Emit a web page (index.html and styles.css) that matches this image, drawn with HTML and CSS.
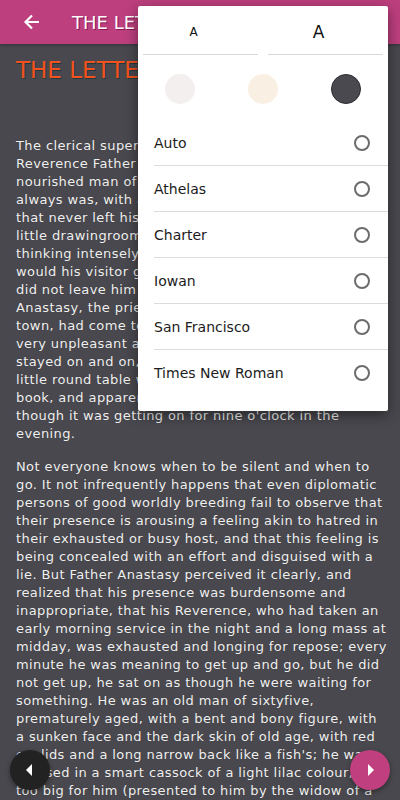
FILE: index.html
```html
<!DOCTYPE html>
<html>
<head>
    <link rel="stylesheet" href="styles.css">
</head>
<body>

<header class="topbar">
    <a href="#back" class="back-btn">
        <svg width="18" height="18" viewBox="0 0 18 18"><path d="M16 9H3M9 2.5L2.5 9 9 15.5" fill="none" stroke="#fff" stroke-width="2.2"/></svg>
    </a>
    <span class="topbar-title">THE LETTER</span>
</header>

<main class="chapter">
    <h1 class="chapter-title">THE LETTER</h1>

    <p>The clerical superintendent of the district, his<br>
    Reverence Father Fyodor Orlov, a handsome, well-<br>
    nourished man of fifty, grand and severe as he<br>
    always was, with an expression of dignity<br>
    that never left his face, was walking to and fro in his<br>
    little drawingroom, extremely exhausted, and<br>
    thinking intensely about the same thing: "When<br>
    would his visitor go?" The thought worried him and<br>
    did not leave him for a minute. The visitor, Father<br>
    Anastasy, the priest of one of the villages near the<br>
    town, had come to him three hours before on some<br>
    very unpleasant and dreary business of his own, had<br>
    stayed on and on, was now sitting in the corner at a<br>
    little round table with his elbow on a thick account<br>
    book, and apparently had no thought of going,<br>
    though it was getting on for nine o'clock in the<br>
    evening.</p>

    <p>Not everyone knows when to be silent and when to<br>
    go. It not infrequently happens that even diplomatic<br>
    persons of good worldly breeding fail to observe that<br>
    their presence is arousing a feeling akin to hatred in<br>
    their exhausted or busy host, and that this feeling is<br>
    being concealed with an effort and disguised with a<br>
    lie. But Father Anastasy perceived it clearly, and<br>
    realized that his presence was burdensome and<br>
    inappropriate, that his Reverence, who had taken an<br>
    early morning service in the night and a long mass at<br>
    midday, was exhausted and longing for repose; every<br>
    minute he was meaning to get up and go, but he did<br>
    not get up, he sat on as though he were waiting for<br>
    something. He was an old man of sixtyfive,<br>
    prematurely aged, with a bent and bony figure, with<br>
    a sunken face and the dark skin of old age, with red<br>
    eyelids and a long narrow back like a fish's; he was<br>
    dressed in a smart cassock of a light lilac colour, but<br>
    too big for him (presented to him by the widow of a</p>
</main>

<div class="settings">
    <div class="size-row">
        <button class="size-btn size-small">A</button>
        <button class="size-btn size-large">A</button>
    </div>
    <div class="theme-row">
        <span class="swatch swatch-white"></span>
        <span class="swatch swatch-sepia"></span>
        <span class="swatch swatch-night"></span>
    </div>
    <ul class="font-list">
        <li class="font-item">Auto <span class="radio"></span></li>
        <li class="font-item">Athelas <span class="radio"></span></li>
        <li class="font-item">Charter <span class="radio"></span></li>
        <li class="font-item">Iowan <span class="radio"></span></li>
        <li class="font-item">San Francisco <span class="radio"></span></li>
        <li class="font-item">Times New Roman <span class="radio"></span></li>
    </ul>
</div>

<a href="#prev" class="page-btn page-prev">
    <svg width="10" height="14" viewBox="0 0 10 14"><path d="M7 1V13L1 7Z" fill="#fff"/></svg>
</a>
<a href="#next" class="page-btn page-next">
    <svg width="10" height="14" viewBox="0 0 10 14"><path d="M3 1V13L9 7Z" fill="#fff"/></svg>
</a>

</body>
</html>
```

FILE: styles.css
```css
html, body {
    margin: 0;
    padding: 0;
    height: 100%;
    overflow: hidden;
}

body {
    background-color: #49484e;
    font-family: "DejaVu Sans", sans-serif;
}

.topbar {
    height: 44px;
    background-color: #bd3f7e;
    display: flex;
    align-items: center;
    box-shadow: 0 1px 3px rgba(0,0,0,0.3);
}

.back-btn {
    width: 18px;
    height: 18px;
    margin: 0 31px 0 23px;
    display: flex;
}

.topbar-title {
    color: white;
    font-size: 18px;
    text-shadow: 1px 1px 0 #8c1454;
    white-space: nowrap;
}

.chapter {
    padding: 0 16px;
}

.chapter-title {
    margin: 12px 0 53px;
    color: #f4511e;
    font-size: 23px;
    font-weight: normal;
    line-height: 28px;
    text-shadow: 1px 1px 0 #1e3b3b;
    white-space: nowrap;
}

.chapter p {
    margin: 0 0 15px;
    color: #f0f0f0;
    font-size: 13px;
    line-height: 18px;
    letter-spacing: 0.4px;
    white-space: nowrap;
    text-shadow: 0 0 1px rgba(0,0,0,0.3);
}

.settings {
    position: absolute;
    top: 6px;
    left: 138px;
    width: 250px;
    padding-bottom: 15px;
    background-color: white;
    border-radius: 2px;
    box-shadow: 0 4px 14px rgba(0,0,0,0.45);
}

.size-row {
    display: flex;
    gap: 10px;
    padding: 0 5px;
}

.size-btn {
    flex: 1;
    height: 49px;
    background: none;
    border: none;
    border-bottom: 1px solid #d8d8d8;
    font-family: "DejaVu Sans", sans-serif;
    color: #111;
    padding: 4px 14px 0 0;
}

.size-small {
    font-size: 12px;
}

.size-large {
    font-size: 17px;
}

.theme-row {
    display: flex;
    justify-content: space-between;
    padding: 19px 27px 16px 27px;
}

.swatch {
    width: 30px;
    height: 30px;
    border-radius: 50%;
    box-sizing: border-box;
}

.swatch-white {
    background-color: #f2efee;
}

.swatch-sepia {
    background-color: #f9efe3;
}

.swatch-night {
    background-color: #4a494f;
    border: 1px solid #2c2b30;
}

.font-list {
    list-style-type: none;
    margin: 0;
    padding: 0 0 0 16px;
}

.font-item {
    height: 46px;
    display: flex;
    align-items: center;
    justify-content: space-between;
    padding-right: 18px;
    border-bottom: 1px solid #dcdcdc;
    box-sizing: border-box;
    font-size: 14px;
    color: #1c1c1c;
}

.font-item:last-child {
    border-bottom: none;
}

.radio {
    width: 16px;
    height: 16px;
    border: 2px solid #6c6c6c;
    border-radius: 50%;
    box-sizing: border-box;
}

.page-btn {
    position: absolute;
    bottom: 10px;
    width: 40px;
    height: 40px;
    border-radius: 50%;
    display: flex;
    align-items: center;
    justify-content: center;
    box-shadow: 0 2px 5px rgba(0,0,0,0.4);
}

.page-prev {
    left: 10px;
    background-color: #222;
}

.page-next {
    right: 10px;
    background-color: #c0407f;
}
```
